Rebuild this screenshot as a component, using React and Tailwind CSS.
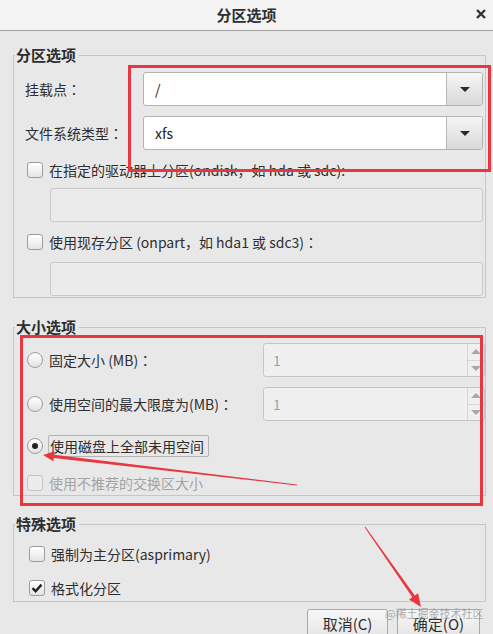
import { useMemo } from "react";

function Colon() {
    return <span className="font-['Noto_Sans_CJK_TC',sans-serif]">：</span>;
}

function Checkbox({ checked, disabled }) {
    return (
        <div
            className={`flex h-[16px] w-[16px] shrink-0 items-center justify-center rounded-[3px] border ${
                disabled
                    ? "border-[#c4c4c4] bg-[#ececec]"
                    : "border-[#9c9c9c] bg-linear-to-b from-[#ffffff] to-[#e4e4e4]"
            }`}
        >
            {checked && (
                <svg width="12" height="12" viewBox="0 0 12 12">
                    <path d="M1.5 6.2 L4.6 9.2 L10.5 2.6" fill="none" stroke="#222" strokeWidth="2.4" />
                </svg>
            )}
        </div>
    );
}

function Radio({ checked }) {
    return (
        <div className="flex h-[16px] w-[16px] shrink-0 items-center justify-center rounded-full border border-[#9c9c9c] bg-linear-to-b from-[#ffffff] to-[#e2e2e2]">
            {checked && <div className="h-[6px] w-[6px] rounded-full bg-[#222]" />}
        </div>
    );
}

function Combo({ value }) {
    return (
        <div className="flex h-[34px] w-[340px] overflow-hidden rounded-[3px] border border-[#b3b3b3] bg-white">
            <div className="flex flex-1 items-center pl-[11px] text-[14px] text-[#222]">{value}</div>
            <div className="flex w-[36px] items-center justify-center border-l border-[#b8b8b8] bg-linear-to-b from-[#f6f6f6] to-[#d9d9d9]">
                <div className="h-0 w-0 border-x-[5px] border-t-[5px] border-x-transparent border-t-[#2a2a2a]" />
            </div>
        </div>
    );
}

function Spin() {
    return (
        <div className="flex h-[34px] w-[222px] overflow-hidden rounded-[3px] border border-[#c6c6c6] bg-[#f0f0f0]">
            <div className="flex flex-1 items-center pl-[9px] text-[14px] text-[#a2a2a2]">1</div>
            <div className="flex w-[17px] flex-col border-l border-[#d6d6d6]">
                <div className="flex flex-1 items-center justify-center border-b border-[#d6d6d6]">
                    <div className="h-0 w-0 border-x-[5px] border-b-[5px] border-x-transparent border-b-[#a8a8a8]" />
                </div>
                <div className="flex flex-1 items-center justify-center">
                    <div className="h-0 w-0 border-x-[5px] border-t-[5px] border-x-transparent border-t-[#a8a8a8]" />
                </div>
            </div>
        </div>
    );
}

function Entry() {
    return <div className="h-[34px] w-[433px] rounded-[3px] border border-[#c8c8c8] bg-[#ebebeb]" />;
}

function Group({ title, className, children }) {
    return (
        <fieldset className={`ml-[13px] w-[473px] border border-[#c6c6c6] ${className}`}>
            <legend className="ml-[1px] pl-[1px] pr-[3px] text-[15px] font-bold leading-[16px] text-[#2e2e2e]">
                {title}
            </legend>
            {children}
        </fieldset>
    );
}

function arrow(tx, ty, hx, hy, tailW, shaftW, headLen, headW) {
    const dx = hx - tx;
    const dy = hy - ty;
    const len = Math.hypot(dx, dy);
    const ux = dx / len;
    const uy = dy / len;
    const px = -uy;
    const py = ux;
    const bx = hx - ux * headLen;
    const by = hy - uy * headLen;
    const pts = [
        [tx + px * tailW, ty + py * tailW],
        [bx + px * shaftW, by + py * shaftW],
        [bx + px * headW, by + py * headW],
        [hx, hy],
        [bx - px * headW, by - py * headW],
        [bx - px * shaftW, by - py * shaftW],
        [tx - px * tailW, ty - py * tailW],
    ];
    return pts.map((p) => p.map((v) => v.toFixed(1)).join(",")).join(" ");
}

export default function App() {
    const arrow1 = useMemo(() => arrow(297, 485, 43, 455, 0.4, 1.6, 11, 5), []);
    const arrow2 = useMemo(() => arrow(365, 527, 421, 607, 0.5, 1.5, 13, 5.5), []);

    return (
        <div className="relative h-[634px] w-[493px] overflow-hidden bg-[#e8e8e8] font-['Noto_Sans_CJK_SC',sans-serif] text-[#2e2e2e]">
            <div className="flex h-[31px] items-center justify-center border-b border-[#a3a3a3] bg-[#f3f3f3]">
                <span className="text-[15px] font-bold">分区选项</span>
                <svg className="absolute right-[7px] top-[9px]" width="10" height="10" viewBox="0 0 10 10">
                    <path d="M1 1 L9 9 M9 1 L1 9" stroke="#333" strokeWidth="2.4" />
                </svg>
            </div>

            <Group title="分区选项" className="mt-[16px] pb-[1px]">
                <div className="mt-[9px] flex items-center pl-[11px]">
                    <div className="w-[118px] text-[14px]">
                        挂载点<Colon />
                    </div>
                    <Combo value="/" />
                </div>
                <div className="mt-[10px] flex items-center pl-[11px]">
                    <div className="w-[118px] text-[14px]">
                        文件系统类型<Colon />
                    </div>
                    <Combo value="xfs" />
                </div>
                <div className="mt-[9px] flex h-[22px] items-center gap-[6px] pl-[13px] text-[14px]">
                    <Checkbox />
                    <span>在指定的驱动器上分区(ondisk，如 hda 或 sdc):</span>
                </div>
                <div className="mt-[7px] pl-[36px]">
                    <Entry />
                </div>
                <div className="mt-[9px] flex h-[22px] items-center gap-[6px] pl-[13px] text-[14px]">
                    <Checkbox />
                    <span>
                        使用现存分区 (onpart，如 hda1 或 sdc3)<Colon />
                    </span>
                </div>
                <div className="mt-[9px] pl-[36px]">
                    <Entry />
                </div>
            </Group>

            <Group title="大小选项" className="mt-[21px] pb-[1px]">
                <div className="mt-[8px] flex items-center pl-[13px] text-[14px]">
                    <Radio />
                    <span className="ml-[6px] w-[214px]">
                        固定大小 (MB)<Colon />
                    </span>
                    <Spin />
                </div>
                <div className="mt-[10px] flex items-center pl-[13px] text-[14px]">
                    <Radio />
                    <span className="ml-[6px] w-[214px]">
                        使用空间的最大限度为(MB)<Colon />
                    </span>
                    <Spin />
                </div>
                <div className="mt-[14px] flex h-[22px] items-center pl-[13px] text-[14px]">
                    <Radio checked />
                    <span className="ml-[5px] flex h-[22px] items-center rounded-[2px] border border-[#b4b4b4] pl-[1px] pr-[4px]">
                        使用磁盘上全部未用空间
                    </span>
                </div>
                <div className="mt-[15px] flex h-[22px] items-center gap-[6px] pl-[13px] text-[14px] text-[#a3a3a3]">
                    <Checkbox disabled />
                    <span>使用不推荐的交换区大小</span>
                </div>
            </Group>

            <Group title="特殊选项" className="mt-[20px] pb-[2px]">
                <div className="mt-[11px] flex h-[22px] items-center gap-[6px] pl-[15px] text-[14px]">
                    <Checkbox />
                    <span>强制为主分区(asprimary)</span>
                </div>
                <div className="mt-[12px] flex h-[22px] items-center gap-[6px] pl-[15px] text-[14px]">
                    <Checkbox checked />
                    <span>格式化分区</span>
                </div>
            </Group>

            <div className="mt-[7px] flex justify-end gap-[9px] pr-[13px]">
                <button className="flex h-[34px] w-[81px] items-start justify-center rounded-[3px] border border-[#a9a9a9] bg-linear-to-b from-[#f7f7f7] to-[#e2e2e2] pt-[4px] text-[15px] leading-[20px] text-[#2e2e2e]">
                    取消(C)
                </button>
                <button className="flex h-[34px] w-[83px] items-start justify-center rounded-[3px] border border-[#a9a9a9] bg-linear-to-b from-[#f7f7f7] to-[#e2e2e2] pt-[4px] text-[15px] leading-[20px] text-[#2e2e2e]">
                    确定(O)
                </button>
            </div>

            <div className="absolute left-[128px] top-[65px] h-[107px] w-[363px] border-[3px] border-[#e8373f]" />
            <div className="absolute left-[20px] top-[335px] h-[171px] w-[463px] border-[3px] border-[#e8373f]" />

            <svg className="pointer-events-none absolute left-0 top-0" width="493" height="634">
                <polygon points={arrow1} fill="#e8373f" />
                <polygon points={arrow2} fill="#e8373f" />
            </svg>

            <div className="absolute left-[385px] top-[606px] text-[11px] leading-[14px] text-[#9c9c9c] opacity-80">
                @稀土掘金技术社区
            </div>
        </div>
    );
}
